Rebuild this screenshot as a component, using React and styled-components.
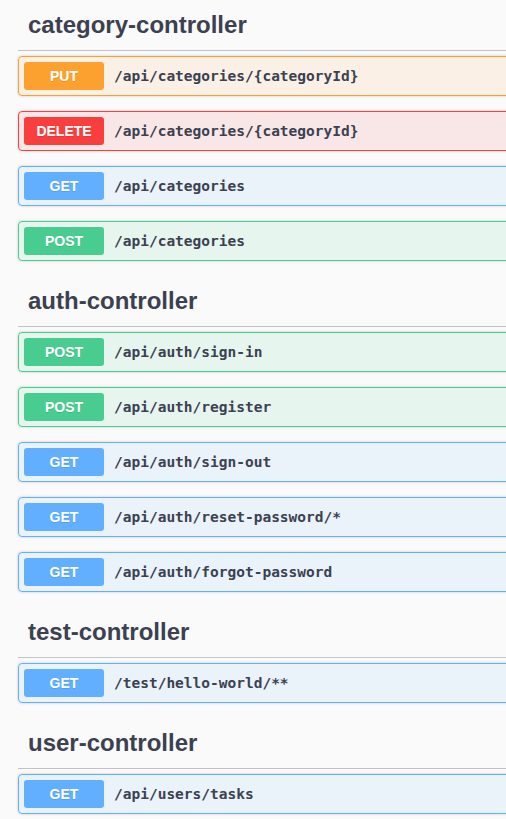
import styled, { createGlobalStyle } from "styled-components"

const GlobalStyle = createGlobalStyle`
    html, body {
        margin: 0;
        background: #fafafa;
        overflow: hidden;
    }
`

const methodColors = {
    put: { main: "#fca130", bg: "rgba(252, 161, 48, 0.1)" },
    delete: { main: "#f93e3e", bg: "rgba(249, 62, 62, 0.1)" },
    get: { main: "#61affe", bg: "rgba(97, 175, 254, 0.1)" },
    post: { main: "#49cc90", bg: "rgba(73, 204, 144, 0.1)" },
}

const Wrapper = styled.div`
    width: 640px;
    margin-left: 18px;
    font-family: "Liberation Sans", Arial, sans-serif;
    color: #3b4151;
`

const TagSection = styled.section`
    display: flex;
    flex-direction: column;
`

const TagTitle = styled.h3`
    margin: 0 0 5px;
    padding: 10px 20px 10px 10px;
    font-size: 24px;
    line-height: 30px;
    font-weight: 700;
    border-bottom: 1px solid rgba(59, 65, 81, 0.3);
`

const OpBlock = styled.div`
    display: flex;
    align-items: center;
    gap: 10px;
    margin: 0 0 15px;
    padding: 5px;
    border: 1px solid ${(p) => methodColors[p.$method].main};
    border-radius: 4px;
    background: ${(p) => methodColors[p.$method].bg};
    box-shadow: 0 0 3px rgba(0, 0, 0, 0.19);
`

const Method = styled.span`
    min-width: 80px;
    height: 28px;
    display: flex;
    align-items: center;
    justify-content: center;
    border-radius: 3px;
    background: ${(p) => methodColors[p.$method].main};
    color: #fff;
    font-size: 14px;
    font-weight: 700;
    text-shadow: 0 1px 0 rgba(0, 0, 0, 0.1);
`

const Path = styled.span`
    font-family: "DejaVu Sans Mono", "Liberation Mono", monospace;
    font-size: 14.5px;
    font-weight: 700;
    color: #3b4151;
`

const tags = [
    {
        name: "category-controller",
        ops: [
            ["put", "/api/categories/{categoryId}"],
            ["delete", "/api/categories/{categoryId}"],
            ["get", "/api/categories"],
            ["post", "/api/categories"],
        ],
    },
    {
        name: "auth-controller",
        ops: [
            ["post", "/api/auth/sign-in"],
            ["post", "/api/auth/register"],
            ["get", "/api/auth/sign-out"],
            ["get", "/api/auth/reset-password/*"],
            ["get", "/api/auth/forgot-password"],
        ],
    },
    {
        name: "test-controller",
        ops: [["get", "/test/hello-world/**"]],
    },
    {
        name: "user-controller",
        ops: [["get", "/api/users/tasks"]],
    },
]

const App = () => {
    return (
        <>
            <GlobalStyle />
            <Wrapper>
                {tags.map((tag) => (
                    <TagSection key={tag.name}>
                        <TagTitle>{tag.name}</TagTitle>
                        {tag.ops.map(([method, path]) => (
                            <OpBlock key={method + path} $method={method}>
                                <Method $method={method}>{method.toUpperCase()}</Method>
                                <Path>{path}</Path>
                            </OpBlock>
                        ))}
                    </TagSection>
                ))}
            </Wrapper>
        </>
    )
}

export default App
